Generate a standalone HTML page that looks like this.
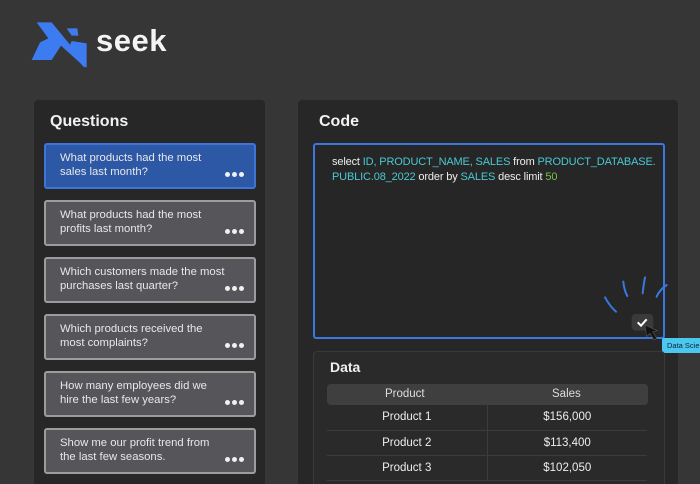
<!DOCTYPE html>
<html><head><style>
*{margin:0;padding:0;box-sizing:border-box}
html,body{width:700px;height:484px;overflow:hidden}
body{background:#363636;font-family:"Liberation Sans",sans-serif;position:relative;color:#fff}
.abs{position:absolute}
.panel{background:#272727;border-radius:4px}
h2{position:absolute;font-size:16px;font-weight:bold;color:#f2f2f2}
.card{position:absolute;left:44px;width:212px;height:46px;background:#56565a;border:2px solid #9c9c9c;border-radius:3px;font-size:11.3px;line-height:14px;color:#e8e8e8;padding:6px 0 0 14px}
.card.sel{background:#2d58a6;border-color:#3d74d6}
.dots{position:absolute;right:10px;bottom:6px;font-size:9px}
.dots i{display:inline-block;width:5px;height:5px;border-radius:50%;background:#f0f0f0;margin-left:2px}
.c{color:#4ac9d4}.g{color:#7cc04a}
table{border-collapse:collapse;font-size:11.5px;color:#eee}
td{width:160px;height:25px;text-align:center;border-bottom:1px solid #3c3c3c}
td+td{border-left:1px solid #3c3c3c}
</style></head><body>
<svg class="abs" style="left:25px;top:15px" width="70" height="60" viewBox="0 0 210 180">
<polygon fill="#3d7bf0" points="35,22 80,22 185,150 180,157 108,92 80,135 20,135 45,82 70,70"/>
<polygon fill="#3d7bf0" points="125,40 157,40 160,62 140,62"/>
<polygon fill="#3d7bf0" points="140,78 185,85 185,157 175,155 130,100"/>
</svg>
<div class="abs" style="left:96px;top:23px;font-size:31px;font-weight:bold;color:#f4f4f4;letter-spacing:0.5px">seek</div>

<div class="abs panel" style="left:34px;top:100px;width:231px;height:400px"></div>
<h2 style="left:50px;top:113px">Questions</h2>
<div class="card sel" style="top:143px">What products had the most<br>sales last month?<span class="dots"><i></i><i></i><i></i></span></div>
<div class="card" style="top:200px">What products had the most<br>profits last month?<span class="dots"><i></i><i></i><i></i></span></div>
<div class="card" style="top:257px">Which customers made the most<br>purchases last quarter?<span class="dots"><i></i><i></i><i></i></span></div>
<div class="card" style="top:314px">Which products received the<br>most complaints?<span class="dots"><i></i><i></i><i></i></span></div>
<div class="card" style="top:371px">How many employees did we<br>hire the last few years?<span class="dots"><i></i><i></i><i></i></span></div>
<div class="card" style="top:428px">Show me our profit trend from<br>the last few seasons.<span class="dots"><i></i><i></i><i></i></span></div>

<div class="abs panel" style="left:298px;top:100px;width:380px;height:400px"></div>
<h2 style="left:319px;top:113px">Code</h2>
<div class="abs" style="left:313px;top:143px;width:352px;height:196px;border:2px solid #3a78e0;border-radius:3px;background:#262626;padding:10px 0 0 17px;font-size:11px;line-height:15px;color:#eee;letter-spacing:-0.15px;white-space:nowrap">select <span class="c">ID, PRODUCT_NAME, SALES</span> from <span class="c">PRODUCT_DATABASE.</span><br><span class="c">PUBLIC.08_2022</span> order by <span class="c">SALES</span> desc limit <span class="g">50</span></div>
<svg class="abs" style="left:590px;top:270px" width="110" height="90" viewBox="0 0 330 270">
<g stroke="#3a78e0" stroke-width="6" fill="none" stroke-linecap="round">
<path d="M45 82 Q60 110 78 125"/><path d="M100 35 Q102 60 112 78"/><path d="M165 22 Q160 50 158 70"/><path d="M230 45 Q208 60 200 80"/></g>
<rect x="125" y="132" width="65" height="50" rx="12" fill="#3a3a3a"/>
<path d="M143 157 L153 167 L170 148" stroke="#fff" stroke-width="6" fill="none"/>
<path d="M165 165 L170 200 L180 190 L192 210 L200 205 L188 185 L202 182 Z" fill="#111" stroke="#555" stroke-width="2"/>
</svg>
<div class="abs" style="left:662px;top:338px;width:45px;height:15px;background:#4cc7f0;border-radius:2px;color:#123;font-size:7.5px;padding:3px 0 0 5px;white-space:nowrap">Data Scien</div>

<div class="abs" style="left:313px;top:351px;width:352px;height:140px;background:#2a2a2a;border:1px solid #3a3a3a;border-radius:4px"></div>
<div class="abs" style="left:330px;top:359px;font-size:14px;font-weight:bold;color:#f0f0f0">Data</div>
<div class="abs" style="left:327px;top:384px;width:321px;height:21px;background:#3f3f3f;border-radius:4px;font-size:11.5px;color:#ddd"><span class="abs" style="left:58px;top:4px">Product</span><span class="abs" style="left:225px;top:4px">Sales</span></div>
<table class="abs" style="left:327px;top:405px">
<tr><td>Product 1</td><td>$156,000</td></tr>
<tr><td>Product 2</td><td>$113,400</td></tr>
<tr><td>Product 3</td><td>$102,050</td></tr>
</table>
</body></html>
